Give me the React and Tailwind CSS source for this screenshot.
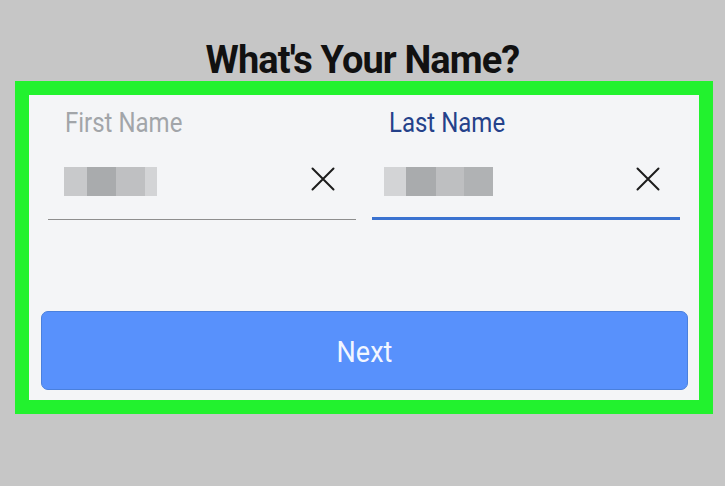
import React from 'react';

const XIcon = () => (
  <svg width="24" height="24" viewBox="0 0 24 24" className="shrink-0">
    <path d="M1.5 1.5 L22.5 22.5 M22.5 1.5 L1.5 22.5" stroke="#1c1c1c" strokeWidth="2" strokeLinecap="round" />
  </svg>
);

const Blur = ({ blocks }) => (
  <div className="flex h-[29px]">
    {blocks.map(([w, c], i) => (
      <div key={i} style={{ width: w, backgroundColor: c }} />
    ))}
  </div>
);

const Field = ({ label, active, blocks, labelClass, rowClass }) => (
  <div className={active ? 'border-b-[3px] border-[#3a72d0]' : 'border-b border-[#8e8e8e]'}>
    <div className={`pl-[17px] pt-[16px] text-[24px] leading-[26px] ${labelClass}`}>
      <span className="inline-block origin-[50%_80%] scale-y-[1.18]">{label}</span>
    </div>
    <div className={`flex items-start justify-between pt-[30px] ${active ? 'h-[79px]' : 'h-[82px]'} ${rowClass}`}>
      <Blur blocks={blocks} />
      <XIcon />
    </div>
  </div>
);

export default function App() {
  return (
    <div className="min-h-[486px] w-[725px] bg-[#c6c6c6] pt-[39px] font-['Roboto',sans-serif]">
      <h1 className="text-center text-[38px] font-bold leading-[42px] tracking-[-0.9px] text-[#111]">
        What's Your Name?
      </h1>
      <div className="ml-[15px] w-[698px] border-[14px] border-[#22f22e] bg-[#f4f5f7]">
        <div className="grid grid-cols-2 gap-4 px-[19px]">
          <Field
            label="First Name"
            labelClass="text-[#a2a5a9]"
            rowClass="pl-[16px] pr-[21px]"
            blocks={[[23, '#c8c9cb'], [29, '#a9abad'], [29, '#bfc0c2'], [12, '#d3d4d6']]}
          />
          <Field
            label="Last Name"
            active
            labelClass="text-[#24418a]"
            rowClass="pl-[12px] pr-[20px]"
            blocks={[[22, '#d3d4d6'], [30, '#a9abad'], [28, '#bebfc1'], [29, '#b0b2b4']]}
          />
        </div>
        <div className="pb-[10px] pl-[12px] pr-[11px] pt-[91px]">
          <button
            type="button"
            className="flex h-[79px] w-full items-center justify-center rounded-[7px] border border-[#4a80dd] bg-[#5891fc] text-[27px] text-[#f2f6ff]"
          >
            <span className="inline-block translate-y-[2px] scale-y-[1.12]">Next</span>
          </button>
        </div>
      </div>
    </div>
  );
}
